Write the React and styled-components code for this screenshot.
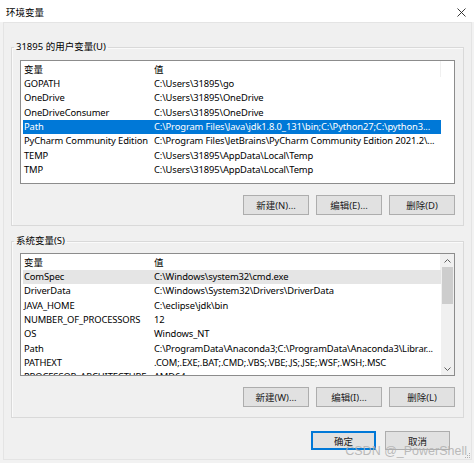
import React from "react";
import styled, { createGlobalStyle } from "styled-components";

const GlobalStyle = createGlobalStyle`
  html, body { margin: 0; padding: 0; background: #f0f0f0; }
  body { font-family: "Noto Sans", "Noto Sans CJK SC", sans-serif; }
  * { box-sizing: border-box; }
`;

const Window = styled.div`
  position: relative;
  width: 474px;
  height: 463px;
  background: #f2f2f2;
  display: flex;
  flex-direction: column;
  overflow: hidden;
  color: #000;
  font-size: 9.4px;
`;

const TitleBar = styled.div`
  height: 22px;
  flex: none;
  background: #fff;
  display: flex;
  align-items: center;
  justify-content: space-between;
  padding: 0 8px 0 6px;
`;

const Title = styled.span`
  font-family: "Noto Sans CJK SC", sans-serif;
  font-size: 9.5px;
  line-height: 12px;
  margin-top: 2px;
`;

const Close = styled.svg`
  width: 9px;
  height: 9px;
  margin-top: 2px;
`;

const Panel = styled.div`
  margin: 0 2px 0 3px;
  height: 438px;
  border: 1px solid #e4e4e4;
  background: #f0f0f0;
  padding: 0 7px;
  display: flex;
  flex-direction: column;
`;

const Group = styled.fieldset`
  margin: ${(p) => p.$top}px 0 0 0;
  padding: 0;
  border: 1px solid #d9d9d9;
  box-shadow: inset 1px 1px 0 #fafafa;
  min-width: 0;
`;

const Legend = styled.legend`
  margin-left: 2px;
  padding: 0 2px;
  line-height: 14px;
  font-size: 9.5px;
  font-family: "Noto Sans", "Noto Sans CJK SC", sans-serif;
`;

const GroupBody = styled.div`
  padding: ${(p) => p.$padTop}px 8px ${(p) => p.$padBottom}px 8px;
  display: flex;
  flex-direction: column;
`;

const ListBox = styled.div`
  height: ${(p) => p.$height}px;
  border: 1px solid #8c8c8c;
  background: #fff;
  display: flex;
  overflow: hidden;
`;

const ListMain = styled.div`
  flex: 1;
  min-width: 0;
  overflow: hidden;
  padding-left: 2px;
`;

const HeaderRow = styled.div`
  display: grid;
  grid-template-columns: 130px 1fr;
  height: 16px;
  align-items: center;
  font-family: "Noto Sans CJK SC", sans-serif;
  font-size: 9.5px;
  border-right: 1px solid #f0f0f0;
`;

const Cell = styled.div`
  padding-left: 1px;
  white-space: nowrap;
  overflow: hidden;
`;

const Row = styled.div`
  display: grid;
  grid-template-columns: 130px 1fr;
  height: 14.33px;
  line-height: 14.33px;
  letter-spacing: -0.12px;
  white-space: nowrap;
  background: ${(p) => (p.$selected ? "#0078d7" : p.$hover ? "#e5e5e5" : "transparent")};
  color: ${(p) => (p.$selected ? "#fff" : "#000")};
`;

const SideBlank = styled.div`
  width: 13px;
  flex: none;
  background: #fff;
`;

const ScrollBar = styled.div`
  width: 13px;
  flex: none;
  background: #f0f0f0;
  display: flex;
  flex-direction: column;
  align-items: stretch;
`;

const ScrollArrow = styled.div`
  height: 13px;
  display: flex;
  align-items: center;
  justify-content: center;
  flex: none;
`;

const ScrollTrack = styled.div`
  flex: 1;
  display: flex;
  flex-direction: column;
`;

const ScrollThumb = styled.div`
  height: 37px;
  margin: 0 1px;
  background: #cdcdcd;
`;

const ButtonRow = styled.div`
  display: flex;
  justify-content: flex-end;
  gap: ${(p) => p.$gap}px;
  margin-top: ${(p) => p.$top}px;
  margin-right: ${(p) => p.$right || 0}px;
`;

const Button = styled.button`
  width: ${(p) => p.$w}px;
  height: ${(p) => p.$h}px;
  padding: 0;
  background: #e1e1e1;
  border: 1px solid ${(p) => (p.$default ? "#0078d7" : "#adadad")};
  box-shadow: ${(p) => (p.$default ? "inset 0 0 0 1px #0078d7" : "none")};
  font-family: "Noto Sans", "Noto Sans CJK SC", sans-serif;
  font-size: 9.5px;
  color: #222;
  display: flex;
  align-items: center;
  justify-content: center;
`;

const Watermark = styled.div`
  position: absolute;
  right: 7px;
  bottom: 5px;
  font-family: "Liberation Sans", Arial, sans-serif;
  font-size: 12.5px;
  color: rgba(175, 175, 175, 0.85);
  pointer-events: none;
`;

const Grip = styled.svg`
  position: absolute;
  right: 3px;
  bottom: 4px;
`;

const userVars = [
  ["GOPATH", "C:\\Users\\31895\\go"],
  ["OneDrive", "C:\\Users\\31895\\OneDrive"],
  ["OneDriveConsumer", "C:\\Users\\31895\\OneDrive"],
  ["Path", "C:\\Program Files\\Java\\jdk1.8.0_131\\bin;C:\\Python27;C:\\python3...", "selected"],
  ["PyCharm Community Edition", "C:\\Program Files\\JetBrains\\PyCharm Community Edition 2021.2\\..."],
  ["TEMP", "C:\\Users\\31895\\AppData\\Local\\Temp"],
  ["TMP", "C:\\Users\\31895\\AppData\\Local\\Temp"],
];

const sysVars = [
  ["ComSpec", "C:\\Windows\\system32\\cmd.exe", "hover"],
  ["DriverData", "C:\\Windows\\System32\\Drivers\\DriverData"],
  ["JAVA_HOME", "C:\\eclipse\\jdk\\bin"],
  ["NUMBER_OF_PROCESSORS", "12"],
  ["OS", "Windows_NT"],
  ["Path", "C:\\ProgramData\\Anaconda3;C:\\ProgramData\\Anaconda3\\Librar..."],
  ["PATHEXT", ".COM;.EXE;.BAT;.CMD;.VBS;.VBE;.JS;.JSE;.WSF;.WSH;.MSC"],
  ["PROCESSOR_ARCHITECTURE", "AMD64"],
];

function VarList({ rows, height, scroll }) {
  return (
    <ListBox $height={height}>
      <ListMain>
        <HeaderRow>
          <Cell>变量</Cell>
          <Cell>值</Cell>
        </HeaderRow>
        {rows.map(([k, v, st]) => (
          <Row key={k} $selected={st === "selected"} $hover={st === "hover"}>
            <Cell>{k}</Cell>
            <Cell>{v}</Cell>
          </Row>
        ))}
      </ListMain>
      {scroll ? (
        <ScrollBar>
          <ScrollArrow>
            <svg width="7" height="4" viewBox="0 0 7 4">
              <path d="M0.5 3.5 L3.5 0.5 L6.5 3.5" fill="none" stroke="#606060" strokeWidth="1" />
            </svg>
          </ScrollArrow>
          <ScrollTrack>
            <ScrollThumb />
          </ScrollTrack>
          <ScrollArrow>
            <svg width="7" height="4" viewBox="0 0 7 4">
              <path d="M0.5 0.5 L3.5 3.5 L6.5 0.5" fill="none" stroke="#606060" strokeWidth="1" />
            </svg>
          </ScrollArrow>
        </ScrollBar>
      ) : (
        <SideBlank />
      )}
    </ListBox>
  );
}

export default function App() {
  return (
    <>
      <GlobalStyle />
      <Window>
        <TitleBar>
          <Title>环境变量</Title>
          <Close viewBox="0 0 9 9">
            <path d="M0.5 0.5 L8.5 8.5 M8.5 0.5 L0.5 8.5" stroke="#222" strokeWidth="0.9" />
          </Close>
        </TitleBar>
        <Panel>
          <Group $top={17}>
            <Legend>31895 的用户变量(U)</Legend>
            <GroupBody $padTop={6} $padBottom={10}>
              <VarList rows={userVars} height={124} />
              <ButtonRow $gap={7} $top={11}>
                <Button $w={66} $h={20}>新建(N)...</Button>
                <Button $w={66} $h={20}>编辑(E)...</Button>
                <Button $w={66} $h={20}>删除(D)</Button>
              </ButtonRow>
            </GroupBody>
          </Group>
          <Group $top={8}>
            <Legend>系统变量(S)</Legend>
            <GroupBody $padTop={5} $padBottom={10}>
              <VarList rows={sysVars} height={123} scroll />
              <ButtonRow $gap={7} $top={11}>
                <Button $w={66} $h={20}>新建(W)...</Button>
                <Button $w={66} $h={20}>编辑(I)...</Button>
                <Button $w={66} $h={20}>删除(L)</Button>
              </ButtonRow>
            </GroupBody>
          </Group>
          <ButtonRow $gap={9} $top={13} $right={14}>
            <Button $w={65} $h={19} $default>确定</Button>
            <Button $w={65} $h={19}>取消</Button>
          </ButtonRow>
        </Panel>
        <Watermark>CSDN @_PowerShell</Watermark>
        <Grip width="6" height="6" viewBox="0 0 6 6">
          <rect x="4" y="0" width="1" height="1" fill="#b0b0b0" />
          <rect x="2" y="2" width="1" height="1" fill="#b0b0b0" />
          <rect x="4" y="2" width="1" height="1" fill="#b0b0b0" />
          <rect x="0" y="4" width="1" height="1" fill="#b0b0b0" />
          <rect x="2" y="4" width="1" height="1" fill="#b0b0b0" />
          <rect x="4" y="4" width="1" height="1" fill="#b0b0b0" />
        </Grip>
      </Window>
    </>
  );
}
